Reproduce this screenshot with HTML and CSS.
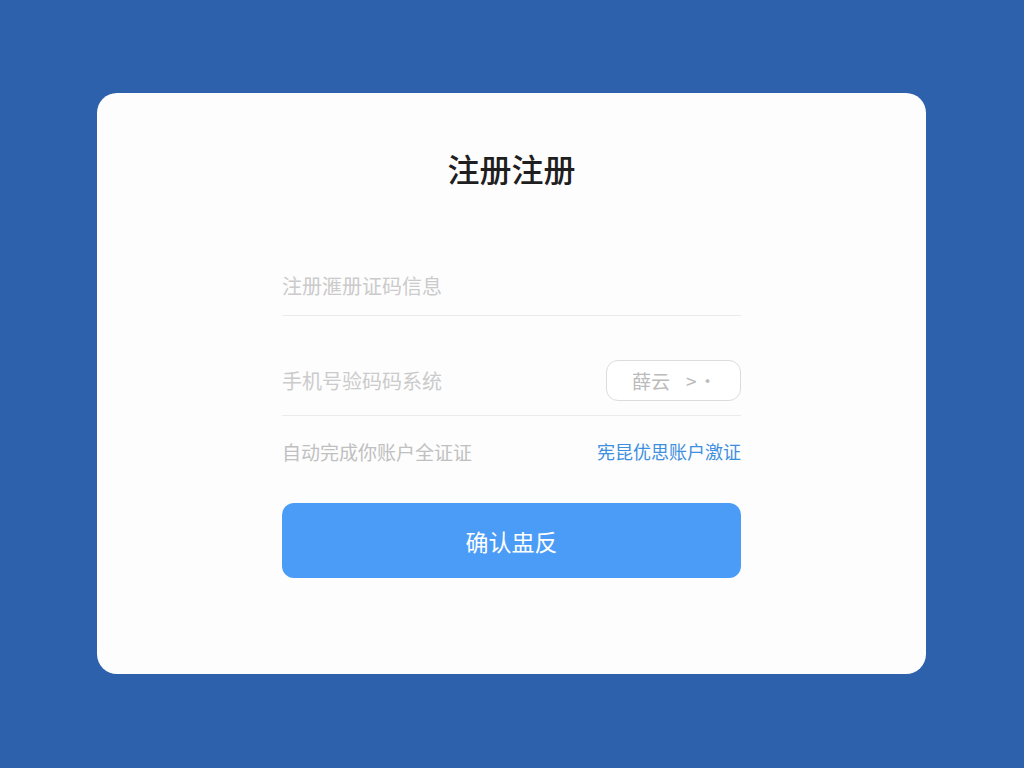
FILE: index.html
```html
<!DOCTYPE html>
<html lang="zh">
<head>
<meta charset="utf-8">
<title>注册</title>
<link rel="stylesheet" href="styles.css">
</head>
<body>
<div class="page">
  <div class="card">
    <h1 class="title">注册注册</h1>
    <div class="form">
      <div class="field field-first">
        <span class="placeholder">注册滙册证码信息</span>
      </div>
      <div class="field field-code">
        <span class="placeholder">手机号验码码系统</span>
        <button class="code-btn"><span class="btn-txt">薛云</span><span class="chev">&gt;</span><span class="dot">·</span></button>
      </div>
      <div class="row">
        <span class="hint">自动完成你账户全证证</span>
        <a class="link">宪昆优思账户激证</a>
      </div>
      <button class="submit">确认盅反</button>
    </div>
  </div>
</div>
</body>
</html>
```
FILE: styles.css
```css
* { box-sizing: border-box; }
html, body { margin: 0; padding: 0; }
body {
  background: #2e61ac;
  font-family: "Noto Sans CJK SC", "Noto Sans", sans-serif;
}
.page {
  width: 1024px;
  height: 768px;
  padding: 0 1px 1px 0;
  display: flex;
  align-items: center;
  justify-content: center;
}
.card {
  width: 829px;
  height: 581px;
  background: #fdfdfd;
  border-radius: 20px;
  padding-top: 55px;
  display: flex;
  flex-direction: column;
  align-items: center;
}
.title {
  margin: 0;
  font-size: 32px;
  line-height: 40px;
  font-weight: 500;
  color: #1f1f1f;
}
.form {
  width: 459px;
  margin-top: 67px;
  display: flex;
  flex-direction: column;
}
.field {
  display: flex;
  align-items: center;
  justify-content: space-between;
  border-bottom: 1px solid #ebebeb;
}
.field-first { height: 61px; }
.field-code { height: 71px; margin-top: 29px; }
.placeholder {
  font-size: 20px;
  color: #cbcbcb;
}
.code-btn {
  width: 135px;
  height: 41px;
  border: 1px solid #dcdcdc;
  border-radius: 12px;
  background: #fff;
  font-family: inherit;
  font-size: 19px;
  color: #bbbbbb;
  display: flex;
  align-items: center;
  justify-content: flex-start;
  text-align: left;
  padding: 0 0 0 25px;
}
.btn-txt { width: 50px; text-align: left; }
.chev { font-size: 19px; margin-left: 4px; }
.dot { font-size: 18px; margin-left: 2px; }
.row {
  margin-top: 24px;
  height: 22px;
  display: flex;
  align-items: center;
  justify-content: space-between;
}
.hint {
  font-size: 19px;
  color: #c0c0c0;
}
.link {
  font-size: 18px;
  color: #3d8fdf;
}
.submit {
  margin-top: 41px;
  height: 75px;
  border: none;
  border-radius: 12px;
  background: #4a9cf6;
  color: #fff;
  font-family: inherit;
  font-size: 23px;
}
```
